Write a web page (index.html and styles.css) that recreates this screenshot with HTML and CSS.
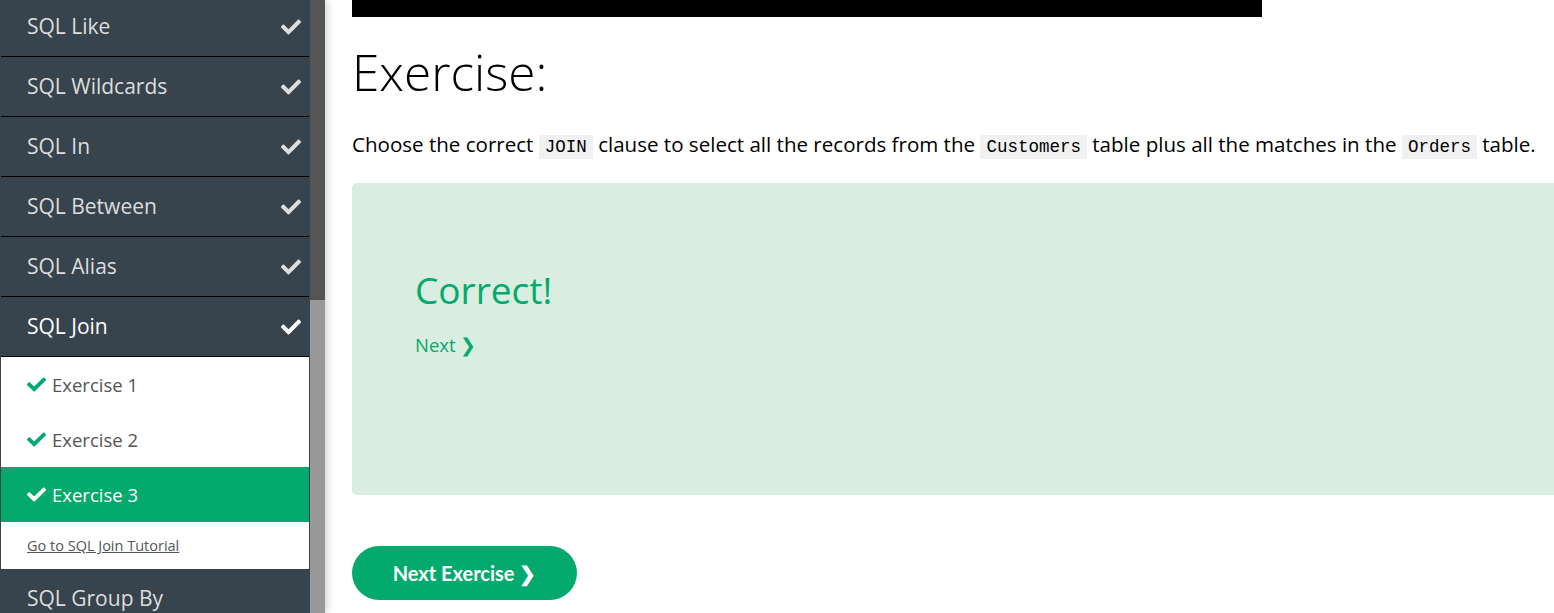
FILE: index.html
```html
<!DOCTYPE html>
<html>
<head>
<meta charset="utf-8">
<link rel="stylesheet" href="styles.css">
</head>
<body>
<div class="page">
  <aside class="sidebar">
    <div class="menu">
      <div class="topic"><span>SQL Like</span><svg class="tick" viewBox="0 0 512 512"><path d="M173.9 439.4l-166.4-166.4c-10-10-10-26.2 0-36.2l36.2-36.2c10-10 26.2-10 36.2 0L192 312.7 432.1 72.6c10-10 26.2-10 36.2 0l36.2 36.2c10 10 10 26.2 0 36.2l-294.4 294.4c-10 10-26.2 10-36.2 0z"/></svg></div>
      <div class="topic"><span>SQL Wildcards</span><svg class="tick" viewBox="0 0 512 512"><path d="M173.9 439.4l-166.4-166.4c-10-10-10-26.2 0-36.2l36.2-36.2c10-10 26.2-10 36.2 0L192 312.7 432.1 72.6c10-10 26.2-10 36.2 0l36.2 36.2c10 10 10 26.2 0 36.2l-294.4 294.4c-10 10-26.2 10-36.2 0z"/></svg></div>
      <div class="topic"><span>SQL In</span><svg class="tick" viewBox="0 0 512 512"><path d="M173.9 439.4l-166.4-166.4c-10-10-10-26.2 0-36.2l36.2-36.2c10-10 26.2-10 36.2 0L192 312.7 432.1 72.6c10-10 26.2-10 36.2 0l36.2 36.2c10 10 10 26.2 0 36.2l-294.4 294.4c-10 10-26.2 10-36.2 0z"/></svg></div>
      <div class="topic"><span>SQL Between</span><svg class="tick" viewBox="0 0 512 512"><path d="M173.9 439.4l-166.4-166.4c-10-10-10-26.2 0-36.2l36.2-36.2c10-10 26.2-10 36.2 0L192 312.7 432.1 72.6c10-10 26.2-10 36.2 0l36.2 36.2c10 10 10 26.2 0 36.2l-294.4 294.4c-10 10-26.2 10-36.2 0z"/></svg></div>
      <div class="topic"><span>SQL Alias</span><svg class="tick" viewBox="0 0 512 512"><path d="M173.9 439.4l-166.4-166.4c-10-10-10-26.2 0-36.2l36.2-36.2c10-10 26.2-10 36.2 0L192 312.7 432.1 72.6c10-10 26.2-10 36.2 0l36.2 36.2c10 10 10 26.2 0 36.2l-294.4 294.4c-10 10-26.2 10-36.2 0z"/></svg></div>
      <div class="topic topic-open"><span>SQL Join</span><svg class="tick" viewBox="0 0 512 512"><path d="M173.9 439.4l-166.4-166.4c-10-10-10-26.2 0-36.2l36.2-36.2c10-10 26.2-10 36.2 0L192 312.7 432.1 72.6c10-10 26.2-10 36.2 0l36.2 36.2c10 10 10 26.2 0 36.2l-294.4 294.4c-10 10-26.2 10-36.2 0z"/></svg></div>
      <div class="sub">
        <div class="ex"><svg class="ex-tick" viewBox="0 0 512 512"><path d="M173.9 439.4l-166.4-166.4c-10-10-10-26.2 0-36.2l36.2-36.2c10-10 26.2-10 36.2 0L192 312.7 432.1 72.6c10-10 26.2-10 36.2 0l36.2 36.2c10 10 10 26.2 0 36.2l-294.4 294.4c-10 10-26.2 10-36.2 0z"/></svg><span>Exercise 1</span></div>
        <div class="ex"><svg class="ex-tick" viewBox="0 0 512 512"><path d="M173.9 439.4l-166.4-166.4c-10-10-10-26.2 0-36.2l36.2-36.2c10-10 26.2-10 36.2 0L192 312.7 432.1 72.6c10-10 26.2-10 36.2 0l36.2 36.2c10 10 10 26.2 0 36.2l-294.4 294.4c-10 10-26.2 10-36.2 0z"/></svg><span>Exercise 2</span></div>
        <div class="ex ex-active"><svg class="ex-tick" viewBox="0 0 512 512"><path d="M173.9 439.4l-166.4-166.4c-10-10-10-26.2 0-36.2l36.2-36.2c10-10 26.2-10 36.2 0L192 312.7 432.1 72.6c10-10 26.2-10 36.2 0l36.2 36.2c10 10 10 26.2 0 36.2l-294.4 294.4c-10 10-26.2 10-36.2 0z"/></svg><span>Exercise 3</span></div>
        <div class="tut"><a href="#">Go to SQL Join Tutorial</a></div>
      </div>
      <div class="topic"><span>SQL Group By</span></div>
    </div>
    <div class="scrollbar"><div class="thumb"></div></div>
  </aside>
  <main class="main">
    <div class="topbar"></div>
    <h1 class="title">Exercise:</h1>
    <p class="question">Choose the correct <code>JOIN</code> clause to select all the records from the <code>Customers</code> table plus all the matches in the <code>Orders</code> table.</p>
    <div class="result">
      <div class="correct">Correct!</div>
      <a class="next" href="#">Next ❯</a>
    </div>
    <a class="btn" href="#">Next Exercise ❯</a>
  </main>
</div>
</body>
</html>
```
FILE: styles.css
```css
html, body {
  margin: 0;
  padding: 0;
  background: #fff;
  overflow: hidden;
}
body {
  font-family: "Open Sans", "Noto Sans", sans-serif;
}
.page {
  display: flex;
  height: 613px;
}
.sidebar {
  display: flex;
  flex: 0 0 325px;
  height: 613px;
  box-shadow: 2px 0 8px rgba(0,0,0,0.18);
  position: relative;
  z-index: 1;
  background: #38444d;
}
.menu {
  width: 310px;
  background: #38444d;
  overflow: hidden;
}
.topic {
  box-sizing: border-box;
  height: 57px;
  border-bottom: 1px solid #000;
  margin: 3px 1px 0;
  padding: 0 8px 4px 26px;
  display: flex;
  align-items: center;
  justify-content: space-between;
  color: #dddddd;
  font-size: 21px;
}
.topic:first-child {
  margin-top: 0;
}
.topic-open {
  color: #fff;
}
.tick {
  width: 20px;
  height: 20px;
  fill: #dddddd;
  margin-top: 2px;
}
.topic-open .tick {
  fill: #fff;
}
.sub {
  background: #fff;
  margin: 0 1px;
}
.ex {
  height: 55px;
  display: flex;
  align-items: center;
  padding-left: 26px;
  color: #555;
  font-size: 18.5px;
  gap: 6px;
}
.ex-tick {
  width: 19px;
  height: 19px;
  fill: #04aa6d;
}
.ex-active {
  background: #04aa6d;
  color: #fff;
}
.ex-active .ex-tick {
  fill: #fff;
}
.tut {
  height: 47px;
  display: flex;
  align-items: center;
  padding-left: 26px;
}
.tut a {
  color: #555;
  font-size: 14.5px;
  text-decoration: underline;
}
.sub + .topic {
  margin-top: 0;
  border-bottom: none;
  padding-bottom: 0;
}
.scrollbar {
  width: 15px;
  background: #999;
}
.thumb {
  height: 300px;
  background: #555;
}
.main {
  flex: 1;
  padding-left: 27px;
  min-width: 0;
}
.topbar {
  width: 910px;
  height: 17px;
  background: #000;
}
.title {
  margin: 20px 0 0;
  font-weight: 300;
  font-size: 49.5px;
  line-height: 70px;
  color: #000;
}
.question {
  margin: 25px 0 0;
  font-size: 20.55px;
  line-height: 25px;
  color: #000;
  white-space: nowrap;
}
.question code {
  font-family: "Liberation Mono", "DejaVu Sans Mono", monospace;
  font-size: 17.5px;
  background: #f1f1f1;
  padding: 2px 6px;
}
.result {
  margin-top: 23px;
  height: 312px;
  width: 1300px;
  background: #d9eee1;
  border-radius: 5px;
  padding: 83px 63px 0;
  box-sizing: border-box;
}
.correct {
  color: #04aa6d;
  font-size: 37px;
  line-height: 48px;
}
.next {
  display: inline-block;
  margin-top: 18px;
  color: #04aa6d;
  font-size: 18.5px;
  text-decoration: none;
}
.btn {
  display: inline-flex;
  align-items: center;
  justify-content: center;
  margin-top: 51px;
  width: 225px;
  height: 54px;
  border-radius: 27px;
  background: #04aa6d;
  color: #fff;
  font-family: "Lato", "Open Sans", sans-serif;
  font-weight: 700;
  font-size: 20px;
  text-decoration: none;
}
```
